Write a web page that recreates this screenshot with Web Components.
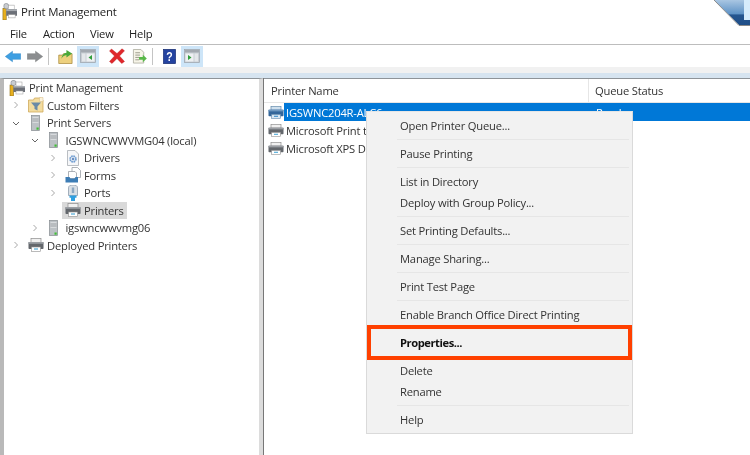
<!DOCTYPE html>
<html>
<head>
<meta charset="utf-8">
<title>Print Management</title>
<style>
html,body{margin:0;padding:0;background:#fff;}
body{width:750px;height:455px;overflow:hidden;font-family:"Open Sans","Noto Sans",sans-serif;font-size:11.2px;letter-spacing:-.2px;color:#333;}
</style>
</head>
<body>
<pm-window>
  <pm-titlebar slot="top">Print Management</pm-titlebar>
  <pm-menubar slot="top"></pm-menubar>
  <pm-toolbar slot="top"></pm-toolbar>
  <pm-tree slot="left">
    <tree-row level="0" icon="app">Print Management</tree-row>
    <tree-row level="1" arrow="right" icon="filter">Custom Filters</tree-row>
    <tree-row level="1" arrow="down" icon="server">Print Servers</tree-row>
    <tree-row level="2" arrow="down" icon="server">IGSWNCWWVMG04 (local)</tree-row>
    <tree-row level="3" arrow="right" icon="driver">Drivers</tree-row>
    <tree-row level="3" arrow="right" icon="forms">Forms</tree-row>
    <tree-row level="3" arrow="right" icon="port">Ports</tree-row>
    <tree-row level="3" icon="printer" current>Printers</tree-row>
    <tree-row level="2" arrow="right" icon="server">igswncwwvmg06</tree-row>
    <tree-row level="1" arrow="right" icon="printer">Deployed Printers</tree-row>
  </pm-tree>
  <pm-list slot="right">
    <list-row icon="printer-sel" status="Ready" selected>IGSWNC204R-ALC6</list-row>
    <list-row icon="printer">Microsoft Print to PDF</list-row>
    <list-row icon="printer">Microsoft XPS Document Writer</list-row>
  </pm-list>
  <ctx-menu slot="over">
    <ctx-item>Open Printer Queue...</ctx-item>
    <ctx-sep></ctx-sep>
    <ctx-item>Pause Printing</ctx-item>
    <ctx-sep></ctx-sep>
    <ctx-item>List in Directory</ctx-item>
    <ctx-item>Deploy with Group Policy...</ctx-item>
    <ctx-sep></ctx-sep>
    <ctx-item>Set Printing Defaults...</ctx-item>
    <ctx-sep></ctx-sep>
    <ctx-item>Manage Sharing...</ctx-item>
    <ctx-sep></ctx-sep>
    <ctx-item>Print Test Page</ctx-item>
    <ctx-sep></ctx-sep>
    <ctx-item>Enable Branch Office Direct Printing</ctx-item>
    <ctx-sep></ctx-sep>
    <ctx-item strong>Properties...</ctx-item>
    <ctx-sep></ctx-sep>
    <ctx-item>Delete</ctx-item>
    <ctx-item>Rename</ctx-item>
    <ctx-sep></ctx-sep>
    <ctx-item>Help</ctx-item>
  </ctx-menu>
</pm-window>

<script>
// icon drawings, all on a 16x16 grid
const ICONS = {
  app: `<rect x="1" y="5" width="3.500" height="11" fill="#e8b01e" stroke="#8a6a10" stroke-width=".6"/>
        <rect x="2" y="0.5" width="5" height="5" rx="2" fill="#c9ccd0" stroke="#7b8088" stroke-width=".6"/>
        <rect x="7" y="2" width="6" height="4" fill="#fff" stroke="#999" stroke-width=".5"/>
        <rect x="4.500" y="6" width="11.500" height="6" fill="#6c7078"/>
        <rect x="4.500" y="6" width="11.500" height="1.600" fill="#a8acb2"/>
        <rect x="7" y="11" width="7" height="3" fill="#fff" stroke="#999" stroke-width=".5"/>`,
  filter: `<path d="M.5 3h5l1-2h6l.5 2h2v12H.5z" fill="#f3dc9f" stroke="#cfa95c" stroke-width=".8"/>
           <path d="M11.500.5h3.500v4h-3.500z" fill="#fbf2dc" stroke="#d6bb80" stroke-width=".5"/>
           <path d="M3 5.500h10L9.500 9.500v4l-3-1.500V9.500z" fill="#6a8aa6"/>`,
  server: `<rect x="3.500" y=".5" width="8" height="15" fill="#bcc1c5" stroke="#858b91" stroke-width=".7"/>
           <path d="M4.500 3h6M4.500 5h6M4.500 7h6" stroke="#f2f3f4" stroke-width="1"/>
           <path d="M4.500 4h6M4.500 6h6" stroke="#70767c" stroke-width=".6"/>
           <rect x="8.500" y="12.500" width="2.200" height="2.200" fill="#3fbf35"/>`,
  driver: `<path d="M2.500.5h7.500l3.500 3.500v11.500h-11z" fill="#f6f7f9" stroke="#a9aeb4" stroke-width=".8"/>
           <circle cx="8" cy="9" r="2.800" fill="none" stroke="#6d9bd0" stroke-width="1.900" stroke-dasharray="1.600 .6"/>
           <circle cx="8" cy="9" r="1" fill="#3f6fb0"/>`,
  forms: `<path d="M7 .5h5.500l3 3v7H7z" fill="#fff" stroke="#8d9299" stroke-width=".7"/>
          <path d="M3.500 4.500h6.500l1.500 1.500v5.500h-8z" fill="#fff" stroke="#8d9299" stroke-width=".7"/>
          <path d="M.5 10h4l1 1.500h4l1-1.500h2.500v5.500H.5z" fill="#3d7db5"/>`,
  port: `<path d="M3.500 2.800a4.500 2.800 0 0 1 9 0V10.500h-9z" fill="#d9dfe5" stroke="#8494a5" stroke-width=".7"/>
         <rect x="6.800" y="2.500" width="2.400" height="5.500" fill="#8ea8c2"/>
         <path d="M4.500 10.500h7v2.200H10V16H6v-3.300H4.500z" fill="#2f9fe0"/>`,
  printer: `<rect x="3" y="1.500" width="10" height="4" fill="#f0f0f0" stroke="#8c8c8c" stroke-width=".7"/>
            <rect x=".5" y="5" width="15" height="7" rx=".8" fill="#63676c"/>
            <rect x=".5" y="5" width="15" height="1.800" fill="#9a9ea3"/>
            <rect x="3.500" y="10" width="9" height="4.500" fill="#fff" stroke="#8c8c8c" stroke-width=".6"/>
            <rect x="6" y="11.500" width="4" height="1" fill="#2e9ad0"/>`,
  "printer-sel": `<rect x="3" y="1.500" width="10" height="4" fill="#cfe0ee" stroke="#5f86a8" stroke-width=".7"/>
            <rect x=".5" y="5" width="15" height="7" rx=".8" fill="#33669a"/>
            <rect x=".5" y="5" width="15" height="1.800" fill="#6d97bf"/>
            <rect x="3.500" y="10" width="9" height="4.500" fill="#d9e7f3" stroke="#5f86a8" stroke-width=".6"/>
            <rect x="6" y="11.500" width="4" height="1" fill="#1e7fc4"/>`,
  back: `<path d="M.3 8 7.500 1.500V4.500h8.200v7H7.500v3z" fill="#3e9fe2" stroke="#2c83c4" stroke-width=".5"/>`,
  forward: `<path d="M15.700 8 8.500 1.500V4.500H.3v7h8.200v3z" fill="#8b8d8f" stroke="#77797b" stroke-width=".5"/>`,
  up: `<path d="M.8 6.500h4l1-1.500h9.200v10.500H.8z" fill="#edd07e" stroke="#a98a3c" stroke-width=".8"/>
       <path d="M3.500 10.500C4 6.500 6.500 4.500 9 4V1L15 4.800 9 9V6.500C7 6.800 5 8 3.500 10.500z" fill="#4aa83a"/>`,
  "pane-left": `<rect x=".5" y="1.500" width="15" height="13" fill="#c9ced4" stroke="#9aa1a8" stroke-width=".7"/>
                <rect x="1" y="2" width="14" height="2.500" fill="#a3a9b0"/>
                <rect x="2" y="5.500" width="3.500" height="8" fill="#e4e7ea"/>
                <rect x="6.500" y="5.500" width="8" height="8" fill="#eef0f2"/>
                <path d="M12 7v5L8.500 9.500z" fill="#2f9e3a"/>`,
  "pane-right": `<rect x=".5" y="1.500" width="15" height="13" fill="#c9ced4" stroke="#9aa1a8" stroke-width=".7"/>
                 <rect x="1" y="2" width="14" height="2.500" fill="#a3a9b0"/>
                 <rect x="1.500" y="5.500" width="8" height="8" fill="#eef0f2"/>
                 <rect x="10.500" y="5.500" width="3.500" height="8" fill="#e4e7ea"/>
                 <path d="M4 7v5l3.500-2.500z" fill="#2f9e3a"/>`,
  del: `<path d="M2.500 1 8 5.500 13 .8l2.500 2L10.500 8l5 5.500-2.800 2L8 10.500 3 15.500.5 13.500 5.500 8 .5 3z" fill="#e0262a" stroke="#b81c20" stroke-width=".4"/>`,
  export: `<path d="M1.500.5h8l3 3v11.500h-11z" fill="#f6f4e8" stroke="#a5a598" stroke-width=".8"/>
           <path d="M3.500 4h5M3.500 6.500h5M3.500 9h4M3.500 11.500h4" stroke="#8e8e7e" stroke-width=".9"/>
           <path d="M7.500 8.500h4V6l4.300 4-4.300 4v-2.500h-4z" fill="#58b848"/>`,
  help: `<rect x=".5" y=".5" width="15" height="15" fill="#2443a0" stroke="#162c72" stroke-width=".8"/>
         <text x="8" y="13" text-anchor="middle" font-family="Liberation Sans" font-weight="700" font-size="13" fill="#fff">?</text>`
};

// small base class: shadow root from a template string
class PmElement extends HTMLElement {
  constructor(){
    super();
    this.attachShadow({mode:"open"});
  }
  render(html){ this.shadowRoot.innerHTML = html; }
}

class PmIcon extends PmElement {
  connectedCallback(){
    const w = this.getAttribute("w") || 16;
    const h = this.getAttribute("h") || w;
    this.render(`<style>:host{display:block;flex:none;line-height:0;}</style>
      <svg width="${w}" height="${h}" viewBox="0 0 16 16" preserveAspectRatio="none">${ICONS[this.getAttribute("name")]}</svg>`);
  }
}

class PmWindow extends PmElement {
  connectedCallback(){
    this.render(`<style>
      :host{display:flex;flex-direction:column;position:relative;width:750px;height:455px;overflow:hidden;background:#fff;filter:blur(.3px);}
      .band{flex:none;height:11px;background:linear-gradient(#f1f1f1 0 6px,#d6e4f0 6px);}
      .panes{flex:1;display:flex;min-height:0;}
      .corner{position:absolute;right:0;top:0;line-height:0;}
    </style>
    <slot name="top"></slot>
    <div class="band"></div>
    <div class="panes"><slot name="left"></slot><slot name="right"></slot></div>
    <slot name="over"></slot>
    <svg class="corner" width="36" height="26" viewBox="0 0 36 26">
      <defs><linearGradient id="cg" x1="0" y1="0" x2="0" y2="1"><stop offset="0" stop-color="#a9c6e2"/><stop offset=".55" stop-color="#5f93c6"/><stop offset=".6" stop-color="#24558f"/><stop offset="1" stop-color="#1f4f88"/></linearGradient></defs>
      <path d="M0 0H36V25H25z" fill="url(#cg)"/>
      <path d="M0 0 25 25.500H36" fill="none" stroke="#8a8a8a" stroke-width="1"/>
      <rect x="30" y="0" width="6" height="20" fill="#d6ecfc"/>
    </svg>`);
  }
}

class PmTitlebar extends PmElement {
  connectedCallback(){
    this.render(`<style>
      :host{display:flex;align-items:center;gap:4px;height:22px;padding-left:2px;font-size:11.4px;color:#222;}
    </style><pm-icon name="app" w="15" h="17"></pm-icon><slot></slot>`);
  }
}

class PmMenubar extends PmElement {
  connectedCallback(){
    this.render(`<style>
      :host{display:flex;align-items:center;height:22px;padding-left:10px;border-bottom:1px solid #bdbdbd;color:#222;}
      span:nth-of-type(1){width:33px} span:nth-of-type(2){width:47px} span:nth-of-type(3){width:39px}
    </style><span>File</span><span>Action</span><span>View</span><span>Help</span>`);
  }
}

class PmToolbar extends PmElement {
  connectedCallback(){
    this.render(`<style>
      :host{display:flex;align-items:center;height:22px;padding-left:5px;}
      .sep{width:1px;height:17px;background:#c4c4c4;}
      .on{display:flex;align-items:center;justify-content:center;width:22px;height:21px;background:#cde5f8;}
    </style>
    <pm-icon name="back" w="16" h="13"></pm-icon>
    <pm-icon name="forward" w="16" h="13" style="margin-left:6px"></pm-icon>
    <div class="sep" style="margin-left:5px"></div>
    <pm-icon name="up" w="15" style="margin-left:9px"></pm-icon>
    <div class="on" style="margin-left:4px"><pm-icon name="pane-left" w="16"></pm-icon></div>
    <pm-icon name="del" w="16" style="margin-left:10px"></pm-icon>
    <pm-icon name="export" w="15" style="margin-left:7px"></pm-icon>
    <div class="sep" style="margin-left:5px"></div>
    <pm-icon name="help" w="13" h="15" style="margin-left:10px"></pm-icon>
    <div class="on" style="margin-left:5px"><pm-icon name="pane-right" w="16"></pm-icon></div>`);
  }
}

class PmTree extends PmElement {
  connectedCallback(){
    this.render(`<style>
      :host{display:block;flex:none;box-sizing:border-box;width:264px;border-left:4px solid #b9b9b9;border-top:1px solid #8e9499;border-right:5px solid #dcdcdc;position:relative;}
      :host::after{content:"";position:absolute;top:-1px;bottom:0;right:-5px;width:1px;background:#777;}
    </style><slot></slot>`);
  }
}

class TreeRow extends PmElement {
  connectedCallback(){
    const level = +this.getAttribute("level");
    const arrow = this.getAttribute("arrow");
    // 18.5px per level, chevron column sits left of the icon
    const chev = arrow === "down"
      ? `<path d="M1 3l3 3 3-3" fill="none" stroke="#666" stroke-width="1"/>`
      : arrow === "right" ? `<path d="M2.500 1l3 3-3 3" fill="none" stroke="#a8a8a8" stroke-width="1"/>` : "";
    this.render(`<style>
      :host{display:block;height:17.5px;}
      .row{display:flex;align-items:center;height:17.5px;padding-left:${level ? level * 18.5 - 10.5 : 5}px;}
      .chev{flex:none;margin-right:7.5px;${level ? "" : "display:none;"}}
      .text{margin-left:${level ? 3.5 : 4}px;white-space:nowrap;}
      .hl{display:flex;align-items:center;height:17.5px;${this.hasAttribute("current") ? "background:#d9d9d9;margin-left:-2.5px;padding:0 3px 0 2.5px;" : ""}}
    </style>
    <div class="row">
      <svg class="chev" width="8" height="8" viewBox="0 0 8 8">${chev}</svg>
      <div class="hl"><pm-icon name="${this.getAttribute("icon")}" w="16" h="16"></pm-icon><span class="text"><slot></slot></span></div>
    </div>`);
  }
}

class PmList extends PmElement {
  connectedCallback(){
    this.render(`<style>
      :host{display:block;flex:1;min-width:0;border-top:1px solid #8e9499;}
      .head{display:flex;align-items:center;height:23px;border-bottom:1px solid #e6e6e6;color:#333;}
      .c1{box-sizing:border-box;width:325px;padding-left:7px;border-right:1px solid #e6e6e6;height:100%;display:flex;align-items:center;}
      .c2{padding-left:6px;}
    </style>
    <div class="head"><div class="c1">Printer Name</div><div class="c2">Queue Status</div></div>
    <slot></slot>`);
  }
}

class ListRow extends PmElement {
  connectedCallback(){
    const sel = this.hasAttribute("selected");
    const status = this.getAttribute("status") || "";
    // rows behind the context menu are clipped at its left edge
    this.render(`<style>
      :host{display:flex;align-items:center;height:18px;padding-left:4px;white-space:nowrap;}
      .body{flex:1;display:flex;align-items:center;height:18px;padding-left:2px;${sel ? "background:#0078d7;color:#fff;" : ""}}
      .name{width:310px;}
      .clip{display:block;overflow:hidden;${sel ? "" : "width:80px;"}}
    </style>
    <pm-icon name="${this.getAttribute("icon")}" w="16" h="15"></pm-icon>
    <div class="body"><span class="name"><span class="clip"><slot></slot></span></span><span>${status}</span></div>`);
  }
}

class CtxMenu extends PmElement {
  connectedCallback(){
    this.render(`<style>
      :host{position:absolute;left:366px;top:111px;box-sizing:border-box;width:267px;height:323px;padding:3px 1px 0;background:#f2f2f2;border:1px solid #dadada;border-top-color:#e6e6e6;color:#333;}
    </style><slot></slot>`);
  }
}

class CtxItem extends PmElement {
  connectedCallback(){
    const strong = this.hasAttribute("strong");
    this.render(`<style>
      :host{display:flex;align-items:center;height:21px;padding-left:32px;white-space:nowrap;position:relative;${strong ? "font-weight:700;color:#111;letter-spacing:-.45px;" : ""}}
      .mark{position:absolute;left:-1px;right:-1px;top:-7px;height:27px;border:4px solid #ff4000;}
    </style><slot></slot>${strong ? '<div class="mark"></div>' : ""}`);
  }
}

class CtxSep extends PmElement {
  connectedCallback(){
    this.render(`<style>
      :host{display:flex;align-items:center;height:7px;padding:0 2px 0 29px;}
      i{display:block;flex:1;height:1px;background:#e6e6e6;}
    </style><i></i>`);
  }
}

customElements.define("pm-icon", PmIcon);
customElements.define("pm-window", PmWindow);
customElements.define("pm-titlebar", PmTitlebar);
customElements.define("pm-menubar", PmMenubar);
customElements.define("pm-toolbar", PmToolbar);
customElements.define("pm-tree", PmTree);
customElements.define("tree-row", TreeRow);
customElements.define("pm-list", PmList);
customElements.define("list-row", ListRow);
customElements.define("ctx-menu", CtxMenu);
customElements.define("ctx-item", CtxItem);
customElements.define("ctx-sep", CtxSep);
</script>
</body>
</html>
